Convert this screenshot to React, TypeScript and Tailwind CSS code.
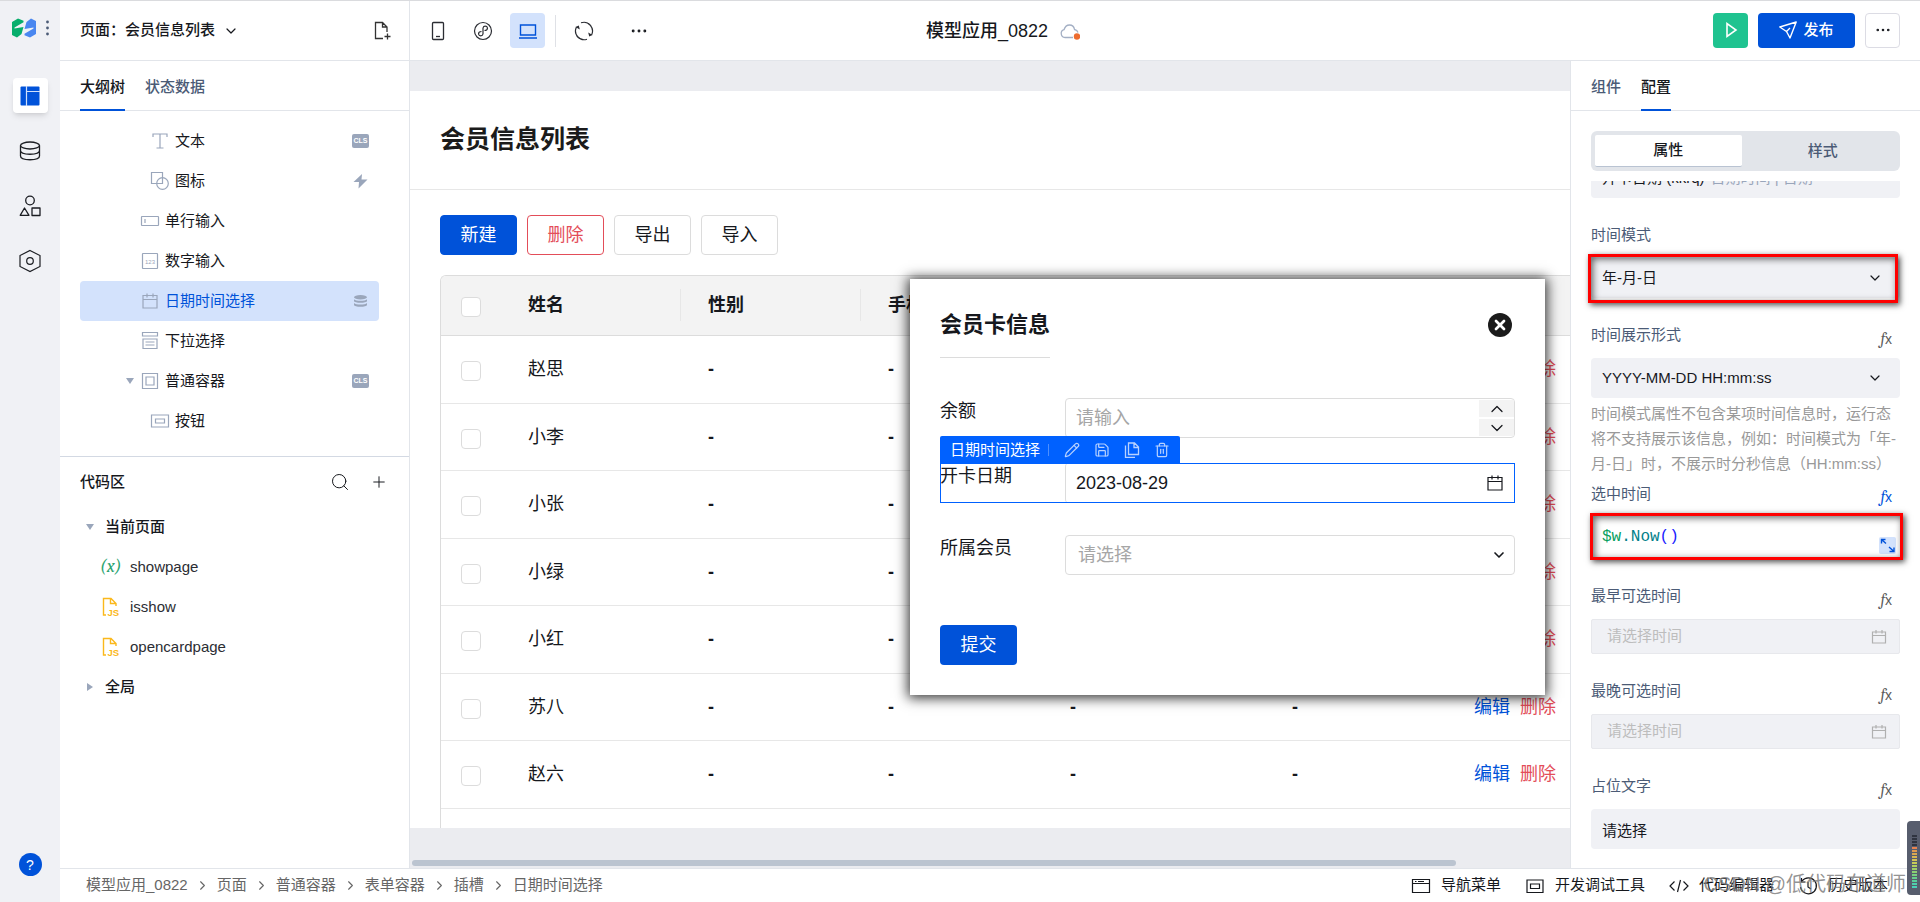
import React, { useState } from 'react';
import type { ReactNode } from 'react';
import { ChevronDown, ChevronRight, ChevronUp, Search, Plus, Ellipsis, X, Pencil, Save, Trash2 } from 'lucide-react';

const members = ['赵思', '小李', '小张', '小绿', '小红', '苏八', '赵六'];

const crumbs = ['模型应用_0822', '页面', '普通容器', '表单容器', '插槽', '日期时间选择'];

type TreeItem = {
  label: string;
  icon: ReactNode;
  deep?: boolean;
  open?: boolean;
  active?: boolean;
  extra?: ReactNode;
};

// Small grey line icon, drawn on a 20px grid
function Glyph({ children }: { children: ReactNode }) {
  return (
    <svg className="w-5 h-5 shrink-0" viewBox="0 0 20 20" fill="none" stroke="currentColor" strokeWidth="1.2">
      {children}
    </svg>
  );
}

function CalendarGlyph() {
  return (
    <Glyph>
      <path d="M3 4.500h14v12.500H3zM3 8.500h14M7 2.500v4M13 2.500v4" />
    </Glyph>
  );
}

function DatabaseSolid() {
  return (
    <svg className="w-[17px] h-4" viewBox="0 0 17 16" fill="currentColor">
      <ellipse cx="8.500" cy="4.200" rx="6.500" ry="2.200" />
      <path d="M2 6.200c1.800 2 11.200 2 13 0v1.700c0 2.400-13 2.400-13 0z" />
      <path d="M2 10c1.800 2 11.200 2 13 0v1.700c0 2.700-13 2.700-13 0z" />
    </svg>
  );
}

function ClsBadge() {
  return (
    <span className="w-[17px] h-3.5 rounded-xs bg-[#9aa6bb] text-white text-[7px] leading-[14px] font-bold text-center">CLS</span>
  );
}

const tree: TreeItem[] = [
  {
    label: '文本',
    deep: true,
    extra: <ClsBadge />,
    icon: <Glyph><path d="M3 6V3h14v3M10 3v14M6.500 17h7" /></Glyph>,
  },
  {
    label: '图标',
    deep: true,
    extra: (
      <svg className="w-[17px] h-4" viewBox="0 0 17 16" fill="currentColor">
        <path d="M10 1 1.500 9h5.500l-.5 6.500L15.500 6.500h-6z" />
      </svg>
    ),
    icon: <Glyph><path d="M1.500 1.500h11v11h-11z" /><circle cx="12.500" cy="12.500" r="5.800" /></Glyph>,
  },
  {
    label: '单行输入',
    icon: <Glyph><rect x="1.500" y="5.500" width="17" height="9" rx=".5" /><path d="M5 8v4" /></Glyph>,
  },
  {
    label: '数字输入',
    icon: (
      <Glyph>
        <rect x="2.500" y="2.500" width="15" height="15" rx=".5" />
        <text x="10" y="12.500" fontSize="6" textAnchor="middle" fill="currentColor" stroke="none">123</text>
      </Glyph>
    ),
  },
  { label: '日期时间选择', active: true, icon: <CalendarGlyph />, extra: <DatabaseSolid /> },
  {
    label: '下拉选择',
    icon: <Glyph><path d="M2.500 1.500h15v3.500h-15zM3 8h14v9.500H3zM5.500 11h9M5.500 14h9" /></Glyph>,
  },
  {
    label: '普通容器',
    open: true,
    extra: <ClsBadge />,
    icon: <Glyph><path d="M2.500 2.500h15v15h-15zM6 6h8v8H6z" /></Glyph>,
  },
  {
    label: '按钮',
    deep: true,
    icon: <Glyph><path d="M1.500 4h17v12h-17zM5.500 8h9v4h-9z" /></Glyph>,
  },
];

function Rail() {
  const item = 'w-[35px] h-[35px] flex items-center justify-center rounded-sm';
  return (
    <nav className="w-15 shrink-0 bg-[#f0f1f5] flex flex-col items-center pb-[26px]">
      <div className="h-[54px] mb-[23px] w-full pl-3 flex items-center gap-2.5">
        <svg className="w-6 h-5 shrink-0" viewBox="0 0 24 20">
          <path d="M0 4 6 .5l5.500 2.200v1.500L2.500 9.500v1l9 -1.500L9.500 16 5 19.500 0 17z" fill="#07ae6c" />
          <path d="M24 16l-6 3.500-5.500-2.200v-1.500l9-5.300v-1l-9 1.500L14.500 4 19 .5 24 3z" fill="#4a87f0" />
        </svg>
        <svg className="w-1 h-4" viewBox="0 0 4 16" fill="#4b5b76">
          <circle cx="1.500" cy="2" r="1.400" />
          <circle cx="1.500" cy="8" r="1.400" />
          <circle cx="1.500" cy="14" r="1.400" />
        </svg>
      </div>
      <div className="flex flex-col gap-5">
        <button aria-label="页面" className={`${item} bg-white shadow-md`}>
          <svg className="w-5 h-5" viewBox="0 0 20 20">
            <rect x=".5" y=".5" width="19" height="19" rx="1" fill="#0052d9" />
            <path d="M6.500 0v20M6.500 5.500H20" stroke="#cfe0fb" strokeWidth="1.200" />
          </svg>
        </button>
        <button aria-label="数据" className={item}>
          <svg className="w-[22px] h-[22px]" viewBox="0 0 22 22" fill="none" stroke="#1b1d22" strokeWidth="1.300">
            <ellipse cx="11" cy="5.500" rx="9.500" ry="3.500" />
            <path d="M1.500 5.500v10.500c0 5 19 5 19 0V5.500M1.500 10.500c0 5 19 5 19 0" />
          </svg>
        </button>
        <button aria-label="组件" className={item}>
          <svg className="w-[22px] h-[22px]" viewBox="0 0 22 22" fill="none" stroke="#1b1d22" strokeWidth="1.300">
            <circle cx="11" cy="5.500" r="4.300" />
            <path d="M5.500 13 10 20.300H1.200zM13 13h8v7.500h-8z" strokeLinejoin="round" />
          </svg>
        </button>
        <button aria-label="设置" className={item}>
          <svg className="w-6 h-6" viewBox="0 0 24 24" fill="none" stroke="#1b1d22" strokeWidth="1.200">
            <path d="M12 1.500 22 6.500v11l-10 5-10-5v-11z" />
            <circle cx="12" cy="12" r="3.300" />
          </svg>
        </button>
      </div>
      <button aria-label="帮助" className="mt-auto w-[23px] h-[23px] rounded-full bg-[#0052d9] text-white text-sm leading-none">?</button>
    </nav>
  );
}

function JsFile() {
  return (
    <svg className="w-5 h-5" viewBox="0 0 20 20" fill="none" stroke="#fbb81b" strokeWidth="1.400">
      <path d="M6 18H3.500V1.500h7.500l5 5V9M10.500 1.500V6.500H16" />
      <text x="7.500" y="18.500" fontSize="9.500" fontWeight="bold" fill="#fbb81b" stroke="none">JS</text>
    </svg>
  );
}

function LeftPanel() {
  return (
    <aside className="w-[350px] shrink-0 bg-white border-r border-[#e2e5ea] flex flex-col">
      <div className="h-15 shrink-0 border-b border-[#e2e5ea] px-5 flex items-center">
        <button className="flex items-center gap-2 font-medium">
          <span>页面：会员信息列表</span>
          <ChevronDown size={16} strokeWidth={1.8} />
        </button>
        <button aria-label="新建页面" className="ml-auto -mr-1">
          <svg className="w-5 h-5" viewBox="0 0 20 20" fill="none" stroke="#333" strokeWidth="1.300">
            <path d="M10 17.500H2.500v-16h7l4.500 4.500v5M9.500 1.500V6H14M14.500 12.500v6M11.500 15.500h6" />
          </svg>
        </button>
      </div>
      <div className="h-[50px] shrink-0 border-b border-[#e2e5ea] px-5 flex gap-5 font-medium">
        <button className="-mb-px border-b-2 border-[#0052d9] pt-1">大纲树</button>
        <button className="-mb-px border-b-2 border-transparent text-[#4b5b76] pt-1">状态数据</button>
      </div>
      <ul className="pt-2.5 pb-[15px] pl-5 pr-[30px]">
        {tree.map((item) => (
          <li
            key={item.label}
            className={`h-10 flex items-center rounded-sm pr-2.5 ${item.deep ? 'pl-[50px]' : 'pl-10'} ${item.active ? 'bg-[#d3e2fc] text-[#0052d9]' : ''}`}
          >
            <span className="w-5 flex justify-center text-[#9aa6bb]">
              {item.open && <svg className="w-2 h-1.5" viewBox="0 0 8 6" fill="currentColor"><path d="M0 0h8L4 6z" /></svg>}
            </span>
            <span className="flex text-[#9aa6bb]">{item.icon}</span>
            <span className="ml-[5px]">{item.label}</span>
            <span className="ml-auto flex text-[#9aa6bb]">{item.extra}</span>
          </li>
        ))}
      </ul>
      <section className="border-t border-[#d3d9e3]">
        <div className="h-[50px] pl-5 pr-[21px] flex items-center">
          <h2 className="font-medium mr-auto">代码区</h2>
          <button aria-label="搜索" className="mr-5"><Search size={20} strokeWidth={1.2} /></button>
          <button aria-label="新增"><Plus size={18} strokeWidth={1.3} /></button>
        </div>
        <ul className="pl-5">
          <li className="h-10 flex items-center font-medium">
            <span className="w-5 flex justify-center mr-[5px]">
              <svg className="w-2 h-1.5" viewBox="0 0 8 6" fill="#9aa6bb"><path d="M0 0h8L4 6z" /></svg>
            </span>
            当前页面
          </li>
          <li className="h-10 flex items-center gap-2.5 pl-5 text-[#2b2d33]">
            <span className="w-5 text-center text-[#2ba471] font-serif italic text-lg leading-5">(x)</span>
            showpage
          </li>
          <li className="h-10 flex items-center gap-2.5 pl-5 text-[#2b2d33]"><JsFile />isshow</li>
          <li className="h-10 flex items-center gap-2.5 pl-5 text-[#2b2d33]"><JsFile />opencardpage</li>
          <li className="h-10 flex items-center font-medium">
            <span className="w-5 flex justify-center mr-[5px]">
              <svg className="w-1.5 h-2" viewBox="0 0 6 8" fill="#9aa6bb"><path d="M0 0v8l6-4z" /></svg>
            </span>
            全局
          </li>
        </ul>
      </section>
    </aside>
  );
}

function TopBar() {
  const tool = 'w-[35px] h-[35px] flex items-center justify-center rounded-sm';
  return (
    <header className="h-15 shrink-0 bg-white border-b border-[#e2e5ea] flex items-center pl-2.5 pr-5">
      <div className="flex items-center gap-2.5">
        <button aria-label="手机" className={tool}>
          <svg className="w-5 h-5" viewBox="0 0 20 20" fill="none" stroke="#2b2d33" strokeWidth="1.300">
            <rect x="4.500" y="1.500" width="11" height="17" rx="1" /><path d="M8 15.500h4" />
          </svg>
        </button>
        <button aria-label="小程序" className={tool}>
          <svg className="w-5 h-5" viewBox="0 0 20 20" fill="none" stroke="#2b2d33" strokeWidth="1.200">
            <circle cx="10" cy="10" r="8.500" />
            <path d="M11.500 9.500c2 0 3-1.200 3-2.500a2.300 2.300 0 0 0-4.500 0v6a2.300 2.300 0 0 1-4.500 0c0-1.300 1-2.500 3-2.500" />
          </svg>
        </button>
        <button aria-label="电脑" className={`${tool} bg-[#d3e2fc]`}>
          <svg className="w-5 h-5" viewBox="0 0 20 20" fill="none" stroke="#0052d9" strokeWidth="1.400">
            <path d="M2.500 4h15v10h-15zM1 17h18" />
          </svg>
        </button>
        <span className="w-px h-8 bg-[#dfe1e6]" />
        <button aria-label="刷新" className={tool}>
          <svg className="w-5 h-5" viewBox="0 0 20 20" fill="none" stroke="#2b2d33" strokeWidth="1.200">
            <path d="M7 1.800A8.700 8.700 0 0 1 17.500 14M13 18.200A8.700 8.700 0 0 1 2.500 6M5.500 17.500A8.700 8.700 0 0 1 2.500 6M14.500 2.500A8.700 8.700 0 0 1 17.500 14" />
            <path d="M5.800 8.500 4.800 4.500 1.500 6zM14.200 11.500l1 4 3.300-1.500z" fill="#2b2d33" stroke="none" />
          </svg>
        </button>
        <button aria-label="更多工具" className={`${tool} ml-2.5`}><Ellipsis size={20} strokeWidth={1.5} /></button>
      </div>
      <div className="ml-[270px] flex items-center gap-3">
        <h1 className="text-lg font-medium">模型应用_0822</h1>
        <svg className="w-5 h-5" viewBox="0 0 20 20" fill="none" stroke="#a3afc4" strokeWidth="1.300">
          <path d="M13 16.500H5a4 4 0 0 1-1-7.800C5 5.500 7 4 9.500 4s4.500 1.500 5 4.500c1.500.3 3 1.300 3.500 3" />
          <circle cx="17" cy="15.500" r="3.200" fill="#ed6c2f" stroke="none" />
        </svg>
      </div>
      <div className="ml-auto flex gap-2.5 mb-px">
        <button aria-label="预览" className={`${tool} bg-[#1fc390]`}>
          <svg className="w-5 h-5" viewBox="0 0 20 20" fill="none" stroke="#fff" strokeWidth="1.600"><path d="M6 3.500v13L15 10z" /></svg>
        </button>
        <button className="w-[97px] h-[35px] rounded-sm bg-[#0052d9] text-white font-medium flex items-center justify-center gap-1.5">
          <svg className="w-[18px] h-[18px]" viewBox="0 0 18 18" fill="none" stroke="#fff" strokeWidth="1.400" strokeLinejoin="round">
            <path d="M.8 6 17.200 1 11 17 7.500 10.500zM7.500 10.500 11 7" />
          </svg>
          发布
        </button>
        <button aria-label="更多" className={`${tool} border border-[#dcdce4]`}><Ellipsis size={18} strokeWidth={1.5} /></button>
      </div>
    </header>
  );
}

function CheckBox({ label }: { label: string }) {
  return (
    <input
      type="checkbox"
      aria-label={label}
      className="appearance-none block w-5 h-5 ml-5 mt-1 rounded-sm border border-[#dcdcdc] bg-white"
    />
  );
}

function MemberTable() {
  const th = 'text-left font-bold p-0';
  const thInner = 'h-8 pl-[27px] flex items-center border-r border-[#e7e7e7]';
  const dash = 'p-0 pl-[27px] font-bold';
  return (
    <div className="mt-5 ml-[30px] border-l border-t border-[#dcdcdc] rounded-tl-md overflow-hidden">
      <table className="w-[1217px] table-fixed text-lg">
        <colgroup>
          <col className="w-15" />
          <col className="w-45" />
          <col className="w-45" />
          <col className="w-[182px]" />
          <col className="w-[222px]" />
          <col className="w-[182px]" />
          <col />
        </colgroup>
        <thead className="bg-[#f3f3f3]">
          <tr className="h-[59px] border-b border-[#dcdcdc]">
            <th className="p-0"><CheckBox label="全选" /></th>
            <th className={th}><div className={thInner}>姓名</div></th>
            <th className={th}><div className={thInner}>性别</div></th>
            <th className={th}><div className={thInner}>手机</div></th>
            <th className={th} />
            <th className={th} />
            <th className={th} />
          </tr>
        </thead>
        <tbody>
          {members.map((name) => (
            <tr key={name} className="odd:h-17 even:h-[67px] border-b border-[#e7e7e7]">
              <td className="p-0"><CheckBox label={name} /></td>
              <td className="p-0 pl-[27px]">{name}</td>
              <td className={dash}>-</td>
              <td className={dash}>-</td>
              <td className={dash}>-</td>
              <td className={dash}>-</td>
              <td className="p-0 pl-[27px] whitespace-nowrap">
                <a href="#edit" className="text-[#0052d9] mr-2.5">编辑</a>
                <a href="#delete" className="text-[#e34d59]">删除</a>
              </td>
            </tr>
          ))}
          <tr className="h-17"><td colSpan={7} /></tr>
        </tbody>
      </table>
    </div>
  );
}

function CardDialog() {
  const label = 'w-[125px] shrink-0 leading-[26px]';
  return (
    <div
      role="dialog"
      aria-label="会员卡信息"
      className="absolute left-[500px] top-[218px] w-[635px] bg-white px-[30px] pt-3.5 pb-[30px] text-lg shadow-[0_1px_12px_2px_rgba(0,0,0,0.8)]"
    >
      <div className="flex justify-between items-start">
        <h2 className="text-[22px] leading-[64px] font-bold border-b border-[#dcdcdc]">会员卡信息</h2>
        <button aria-label="关闭" className="mt-5 mr-[3px] w-6 h-6 rounded-full bg-[#1b1b1b] text-white flex items-center justify-center">
          <X size={16} strokeWidth={4} />
        </button>
      </div>
      <div className="flex mt-10">
        <label htmlFor="balance" className={label}>余额</label>
        <div className="flex-1 h-10 flex border border-[#dcdcdc] rounded-sm overflow-hidden">
          <input id="balance" placeholder="请输入" className="flex-1 min-w-0 pl-2.5 placeholder:text-[#a6a6a6] outline-none" />
          <div className="w-[35px] py-px flex flex-col justify-between">
            <button aria-label="增加" className="h-[17px] bg-[#f3f3f3] flex items-center justify-center"><ChevronUp size={20} strokeWidth={1.5} /></button>
            <button aria-label="减少" className="h-[17px] bg-[#f3f3f3] flex items-center justify-center"><ChevronDown size={20} strokeWidth={1.5} /></button>
          </div>
        </div>
      </div>
      <div className="relative flex mt-[25px] h-10 outline outline-1 -outline-offset-1 outline-[#0061ff]">
        {/* Component toolbar sits on top of the selected field */}
        <div className="absolute left-0 bottom-full w-60 h-[27px] bg-[#0061ff] text-white text-[15px] rounded-t-xs flex items-center px-2.5">
          <span>日期时间选择</span>
          <span className="ml-2 w-px h-3 bg-[#4d90ff]" />
          <div className="ml-auto flex gap-3.5 text-[#b8d2ff]">
            <button aria-label="编辑"><Pencil size={16} strokeWidth={1.8} /></button>
            <button aria-label="保存"><Save size={16} strokeWidth={1.8} /></button>
            <button aria-label="复制">
              <svg className="w-4 h-4" viewBox="0 0 16 16" fill="none" stroke="currentColor" strokeWidth="1.300">
                <path d="M4.500 1h6L14.500 5v7.500h-10zM10 1v4.500h4.500M1.500 3.500v12h9.500" />
              </svg>
            </button>
            <button aria-label="删除"><Trash2 size={16} strokeWidth={1.8} /></button>
          </div>
        </div>
        <label htmlFor="open-date" className={label}>开卡日期</label>
        <div className="flex-1 flex items-center border-l border-[#dcdcdc] rounded-l-sm pr-2.5">
          <input id="open-date" defaultValue="2023-08-29" className="flex-1 min-w-0 pl-2.5 outline-none" />
          <CalendarGlyph />
        </div>
      </div>
      <div className="flex mt-8">
        <label htmlFor="owner" className={label}>所属会员</label>
        <div className="relative flex-1">
          <select id="owner" className="appearance-none w-full h-10 pl-3 border border-[#dcdcdc] rounded-sm text-[#a6a6a6]">
            <option>请选择</option>
          </select>
          <ChevronDown size={16} strokeWidth={2.5} className="absolute right-2 top-3 pointer-events-none" />
        </div>
      </div>
      <button className="block mt-[50px] w-[77px] h-10 rounded-sm bg-[#0052d9] text-white">提交</button>
    </div>
  );
}

function Canvas() {
  const btn = 'w-[77px] h-10 rounded-sm border';
  return (
    <main className="relative flex-1 min-w-0 bg-[#ebecf0] pt-[30px] flex flex-col overflow-hidden">
      <div className="flex-1 min-h-0 bg-white overflow-hidden">
        <div className="h-[99px] pl-[30px] flex items-center border-b border-[#e7e7e7]">
          <h2 className="text-[25px] font-bold text-[#1b1b1b]">会员信息列表</h2>
        </div>
        <div className="pt-[25px] pl-[30px] flex gap-2.5 text-lg">
          <button className={`${btn} border-[#0052d9] bg-[#0052d9] text-white`}>新建</button>
          <button className={`${btn} border-[#e34d59] text-[#e34d59]`}>删除</button>
          <button className={`${btn} border-[#dcdcdc]`}>导出</button>
          <button className={`${btn} border-[#dcdcdc]`}>导入</button>
        </div>
        <MemberTable />
      </div>
      <div className="h-10 shrink-0 pt-8">
        <div className="ml-0.5 w-[90%] h-1.5 rounded-full bg-[#bbc4d0]" />
      </div>
      <CardDialog />
    </main>
  );
}

function Fx({ active }: { active?: boolean }) {
  return (
    <button aria-label="表达式" className={`pt-1.5 pr-2 leading-5 ${active ? 'text-[#0052d9]' : 'text-[#5a5a5a]'}`}>
      <i className="font-serif text-base">f</i>
      <span className="text-sm">x</span>
    </button>
  );
}

function PanelSelect({ id, value }: { id: string; value: string }) {
  return (
    <div className="relative">
      <select id={id} className="appearance-none w-full h-10 pl-[11px] rounded-sm bg-[#f0f1f5]">
        <option>{value}</option>
      </select>
      <ChevronDown size={16} strokeWidth={1.8} className="absolute right-[17px] top-3 pointer-events-none" />
    </div>
  );
}

function TimeField({ id, label }: { id: string; label: string }) {
  return (
    <div className="mt-[15px]">
      <div className="h-[45px] flex items-center justify-between text-[#4b5b76]">
        <label htmlFor={id}>{label}</label>
        <Fx />
      </div>
      <div className="h-[35px] flex items-center pr-3 rounded-xs border border-[#e7e8ec] bg-[#f0f1f5] text-[#b0b0b0]">
        <input id={id} disabled placeholder="请选择时间" className="flex-1 min-w-0 pl-[15px] placeholder:text-[#bdbdbd]" />
        <svg className="w-4 h-4" viewBox="0 0 16 16" fill="none" stroke="currentColor" strokeWidth="1.200">
          <path d="M1.500 3h13v11h-13zM1.500 6.500h13M5 1v3.500M11 1v3.500" />
        </svg>
      </div>
    </div>
  );
}

const marker = 'absolute border-3 border-[#ff0000] pointer-events-none shadow-[2px_2px_6px_rgba(0,0,0,0.7),inset_2px_2px_7px_rgba(0,0,0,0.6)]';

function RightPanel() {
  const [text, setText] = useState('请选择');
  const row = 'h-[45px] flex items-center justify-between text-[#4b5b76]';

  return (
    <aside className="w-[350px] shrink-0 bg-white border-l border-[#e2e5ea] flex flex-col">
      <div className="h-[50px] shrink-0 border-b border-[#e2e5ea] px-5 flex gap-5 font-medium">
        <button className="-mb-px border-b-2 border-transparent text-[#4b5b76] pt-1">组件</button>
        <button className="-mb-px border-b-2 border-[#0052d9] pt-1">配置</button>
      </div>
      <div className="mx-5 mt-5 mb-2.5 h-10 shrink-0 p-1 rounded-md bg-[#e2e5ea] flex gap-2 font-medium">
        <button className="flex-1 rounded-xs bg-white border-b border-[#b9c3d2]">属性</button>
        <button className="flex-1 text-[#4b5b76]">样式</button>
      </div>
      <div className="flex-1 min-h-0 overflow-hidden px-5">
        <button className="-mt-[23px] w-full h-10 px-[11px] rounded-sm bg-[#f0f1f5] flex items-center gap-1.5">
          开卡日期 (kkrq) <span className="text-[#9aa6bb]">日期时间 | 日期</span>
          <ChevronDown size={16} strokeWidth={1.8} className="ml-auto mr-1.5" />
        </button>

        <div className="mt-[15px] relative">
          <label htmlFor="time-mode" className={row}>时间模式</label>
          <PanelSelect id="time-mode" value="年-月-日" />
          <span className={`${marker} -left-[3px] right-0.5 top-[41px] -bottom-[5px]`} />
        </div>

        <div className="mt-[15px]">
          <div className={row}><label htmlFor="time-format">时间展示形式</label><Fx /></div>
          <PanelSelect id="time-format" value="YYYY-MM-DD HH:mm:ss" />
          <p className="mt-[3px] mb-px leading-[25px] text-[#999]">
            时间模式属性不包含某项时间信息时，运行态将不支持展示该信息，例如：时间模式为「年-月-日」时，不展示时分秒信息（HH:mm:ss）
          </p>
        </div>

        <div>
          <div className="h-[34px] flex items-center justify-between text-[#4b5b76]"><span>选中时间</span><Fx active /></div>
          <div className="relative h-12 pl-[11px] flex items-center">
            <code className="mt-1 font-['Liberation_Mono',monospace] text-base text-[#00808a]">
              <span className="text-[#07a05f]">$w</span>.Now<span className="text-[#1a1aff]">()</span>
            </code>
            <button aria-label="展开" className="ml-auto mr-1 mt-5 w-[17px] h-[17px] rounded-xs bg-[#d3e2fc]">
              <svg viewBox="0 0 17 17" fill="none" stroke="#0052d9" strokeWidth="1.400">
                <path d="M2.500 6.500V2.500H6.500M2.500 2.500l4.500 4M10.500 14.500h4.500V10.500M15 14.500l-5-4.500" />
              </svg>
            </button>
            <span className={`${marker} -left-px -right-[3px] top-0.5 -bottom-px`} />
          </div>
        </div>

        <TimeField id="min-time" label="最早可选时间" />
        <TimeField id="max-time" label="最晚可选时间" />

        <div className="mt-[15px]">
          <div className={row}><label htmlFor="placeholder">占位文字</label><Fx /></div>
          <input
            id="placeholder"
            value={text}
            onChange={(e) => setText(e.target.value)}
            className="w-full h-10 pl-[11px] rounded-sm bg-[#f0f1f5]"
          />
        </div>
      </div>
    </aside>
  );
}

function Footer() {
  return (
    <footer className="h-[34px] shrink-0 bg-white border-t border-[#e2e5ea] flex items-center pl-[26px] pr-8">
      <div className="flex items-center text-[#666]">
        {crumbs.map((c, i) => (
          <React.Fragment key={c}>
            {i > 0 && <ChevronRight size={15} strokeWidth={1.8} className="mx-[7px]" />}
            <a href="#crumb">{c}</a>
          </React.Fragment>
        ))}
      </div>
      <div className="ml-auto flex items-center gap-6">
        <button className="flex items-center gap-2.5">
          <Glyph><path d="M1.500 3.500h17v13h-17zM1.500 7.500h17M4 5.500h1.500M7 5.500h6" /></Glyph>导航菜单
        </button>
        <button className="flex items-center gap-2.5">
          <Glyph><path d="M2 4h16v12.500H2zM5.500 8h9v4.500h-9z" /></Glyph>开发调试工具
        </button>
        <button className="flex items-center gap-2.5">
          <Glyph><path d="M5.500 5.500 1 10l4.500 4.500M14.500 5.500 19 10l-4.500 4.500M11.500 4l-3 12" /></Glyph>代码编辑器
        </button>
        <button className="flex items-center gap-2.5">
          <Glyph><path d="M4 5a8 8 0 1 1-1.500 6M3.500 2v4h4M10 6v5l3 2" /></Glyph>历史版本
        </button>
      </div>
    </footer>
  );
}

const meterBars = ['#2f3440', '#2f3440', '#2f3440', '#2f3440', '#e8834f', '#dd9a4f', '#d9a850', '#d6b652', '#d2c355', '#c6cb58', '#b2cf5f', '#9fd068', '#8bd072', '#78d07f', '#66cf8d', '#58ce9b', '#4fcfab', '#4ad0b8'];

export default function App() {
  return (
    <div className="relative h-screen overflow-hidden flex border-t border-[#dadbde] bg-white text-[15px] text-[#16181d] font-['Liberation_Sans','Noto_Sans_CJK_SC',sans-serif]">
      <Rail />
      <div className="flex-1 min-w-0 flex flex-col">
        <div className="flex-1 min-h-0 flex">
          <LeftPanel />
          <div className="flex-1 min-w-0 flex flex-col">
            <TopBar />
            <div className="flex-1 min-h-0 flex">
              <Canvas />
              <RightPanel />
            </div>
          </div>
        </div>
        <Footer />
      </div>
      <span className="absolute right-3.5 bottom-1 text-xl leading-7 text-[#777]/80 pointer-events-none">CSDN @低代码布道师</span>
      <div className="absolute right-0 bottom-[7px] w-[13px] h-[74px] rounded-l-sm bg-[#575d6d] pl-[5px] pt-3.5 flex flex-col gap-px">
        {meterBars.map((color, i) => (
          <span key={i} className="w-[5px] h-0.5" style={{ background: color }} />
        ))}
      </div>
    </div>
  );
}
